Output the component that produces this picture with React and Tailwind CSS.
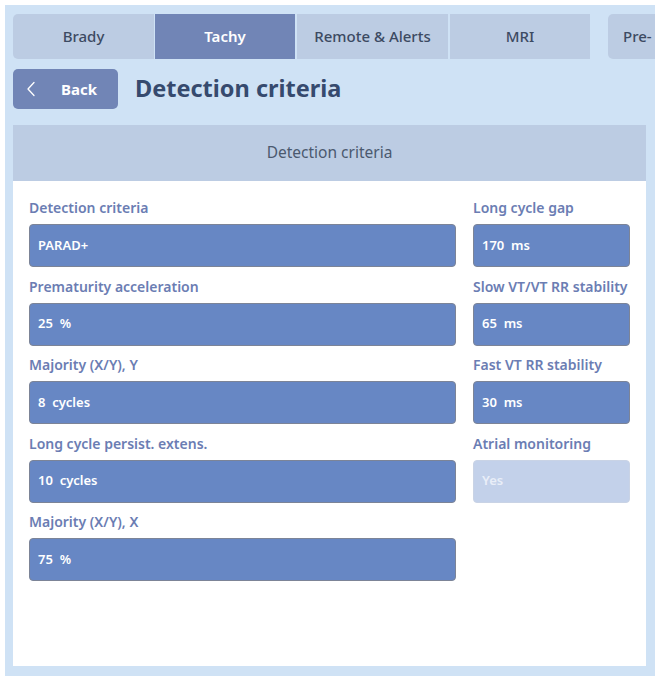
import React from "react";

const tabs = [
  { name: "Brady", w: "w-[141px]", cls: "rounded-l-[5px]" },
  { name: "Tachy", w: "w-[140px]", active: true },
  { name: "Remote & Alerts", w: "w-[151px]" },
  { name: "MRI", w: "w-[140px]" },
];

const leftFields = [
  { label: "Detection criteria", value: "PARAD+" },
  { label: "Prematurity acceleration", value: "25  %" },
  { label: "Majority (X/Y), Y", value: "8  cycles" },
  { label: "Long cycle persist. extens.", value: "10  cycles" },
  { label: "Majority (X/Y), X", value: "75  %" },
];

const rightFields = [
  { label: "Long cycle gap", value: "170  ms" },
  { label: "Slow VT/VT RR stability", value: "65  ms" },
  { label: "Fast VT RR stability", value: "30  ms" },
  { label: "Atrial monitoring", value: "Yes", disabled: true },
];

const Field = ({ label, value, disabled }) => (
  <div className="flex flex-col">
    <div className="h-[20px] leading-[20px] text-[14px] font-semibold text-[#6b7db3] whitespace-nowrap">
      {label}
    </div>
    <div
      className={`mt-[6px] h-[43px] rounded-[4px] border flex items-center pl-[8px] text-[13px] font-semibold whitespace-pre ${
        disabled
          ? "bg-[#c3d1ea] border-[#c9d3e5] text-[#e9eef8]"
          : "bg-[#6787c4] border-[#7c8497] text-white"
      }`}
    >
      {value}
    </div>
  </div>
);

export default function App() {
  return (
    <div
      className="bg-white w-[659px] h-[682px] pt-[5px] pl-[5px] overflow-hidden"
      style={{ fontFamily: '"Noto Sans", "Open Sans", sans-serif' }}
    >
      <div className="w-[650px] h-[671px] bg-[#cfe2f5] pt-[9px] pl-[8px] pr-[9px] pb-[10px] flex flex-col overflow-hidden">
        {/* Tabs */}
        <div className="flex h-[45px] shrink-0 whitespace-nowrap">
          <div className="flex gap-[1px]">
            {tabs.map((t, i) => (
              <div
                key={t.name}
                className={`${t.w} ${t.cls || ""} ${i > 1 ? "ml-[1px]" : ""} h-full flex items-center justify-center text-[15px] font-medium ${
                  t.active ? "bg-[#7185b6] text-white font-semibold" : "bg-[#bccce3] text-[#3c4a62]"
                }`}
              >
                {t.name}
              </div>
            ))}
          </div>
          <div className="ml-[18px] w-[120px] shrink-0 h-full rounded-l-[5px] bg-[#bccce3] text-[#3c4a62] text-[15px] font-medium flex items-center pl-[15px]">
            Pre-
          </div>
        </div>

        {/* Back + heading */}
        <div className="flex items-center mt-[10px] h-[40px] shrink-0">
          <button className="w-[105px] h-[40px] rounded-[5px] bg-[#7185b6] text-white flex items-center pl-[13px]">
            <svg width="10" height="16" viewBox="0 0 10 16" fill="none">
              <path d="M8 1.5 L2 8 L8 14.5" stroke="#ffffff" strokeWidth="1.3" strokeLinecap="round" strokeLinejoin="round" />
            </svg>
            <span className="ml-[25px] text-[15px] font-bold">Back</span>
          </button>
          <h1 className="ml-[17px] text-[23.5px] font-bold text-[#364a6e]">Detection criteria</h1>
        </div>

        {/* Panel */}
        <div className="mt-[16px] flex-1 flex flex-col bg-white">
          <div className="h-[56px] shrink-0 bg-[#bccce3] flex items-center justify-center text-[15.5px] text-[#4b596f]">
            Detection criteria
          </div>
          <div className="flex-1 grid grid-cols-[427px_157px] gap-x-[17px] pl-[16px] pt-[17px] items-start">
            <div className="flex flex-col gap-y-[9.5px]">
              {leftFields.map((f) => (
                <Field key={f.label} {...f} />
              ))}
            </div>
            <div className="flex flex-col gap-y-[9.5px]">
              {rightFields.map((f) => (
                <Field key={f.label} {...f} />
              ))}
            </div>
          </div>
        </div>
      </div>
    </div>
  );
}
